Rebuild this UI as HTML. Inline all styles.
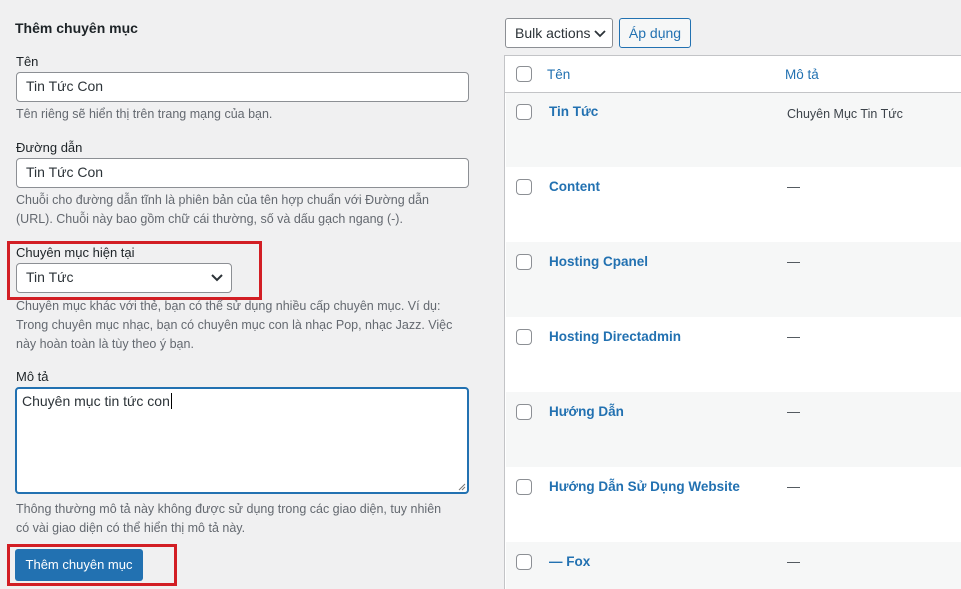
<!DOCTYPE html>
<html><head><meta charset="utf-8"><style>
*{margin:0;padding:0;box-sizing:border-box}
body{width:961px;height:589px;background:#f0f0f1;font-family:"Liberation Sans",sans-serif;font-size:13px;color:#3c434a;position:relative;overflow:hidden}
.a{position:absolute;white-space:nowrap}
.lbl{color:#1d2327;font-size:13px}
.help{color:#646970;font-size:12.5px;line-height:19px}
.inp{position:absolute;background:#fff;border:1px solid #8c8f94;border-radius:4px;font-size:14px;color:#2c3338;padding-left:9px;line-height:27px}
.red{position:absolute;border:3px solid #d21e24}
.cb{position:absolute;width:16px;height:16px;border:1px solid #8c8f94;border-radius:4px;background:#fff;left:516px}
.nm{position:absolute;left:549px;color:#2271b1;font-weight:bold;font-size:13.5px}
.ds{position:absolute;left:787px;color:#3c434a}
.row{position:absolute;left:506px;width:455px;height:75px}
</style></head><body>
<div class="a" style="left:15px;top:20px;font-weight:bold;font-size:14px;color:#1d2327">Thêm chuyên mục</div>
<div class="a lbl" style="left:16px;top:54px">Tên</div>
<div class="inp" style="left:16px;top:72px;width:453px;height:30px">Tin Tức Con</div>
<div class="a help" style="left:16px;top:105px">Tên riêng sẽ hiển thị trên trang mạng của bạn.</div>
<div class="a lbl" style="left:16px;top:140px">Đường dẫn</div>
<div class="inp" style="left:16px;top:158px;width:453px;height:30px">Tin Tức Con</div>
<div class="a help" style="left:16px;top:191px">Chuỗi cho đường dẫn tĩnh là phiên bản của tên hợp chuẩn với Đường dẫn<br>(URL). Chuỗi này bao gồm chữ cái thường, số và dấu gạch ngang (-).</div>
<div class="red" style="left:7px;top:241px;width:255px;height:59px"></div>
<div class="a lbl" style="left:16px;top:245px">Chuyên mục hiện tại</div>
<div class="inp" style="left:16px;top:263px;width:216px;height:30px">Tin Tức
<svg style="position:absolute;right:7px;top:9px" width="14" height="10" viewBox="0 0 14 10"><path d="M2 2l5 5 5-5" stroke="#2c3338" stroke-width="2" fill="none"/></svg></div>
<div class="a help" style="left:16px;top:297px">Chuyên mục khác với thẻ, bạn có thể sử dụng nhiều cấp chuyên mục. Ví dụ:<br>Trong chuyên mục nhạc, bạn có chuyên mục con là nhạc Pop, nhạc Jazz. Việc<br>này hoàn toàn là tùy theo ý bạn.</div>
<div class="a lbl" style="left:16px;top:369px">Mô tả</div>
<div class="inp" style="left:15px;top:387px;width:454px;height:107px;border:2px solid #2271b1;padding-left:5px;line-height:25px">Chuyên mục tin tức con<span style="border-left:1px solid #000;margin-left:1px"></span>
<svg style="position:absolute;right:1px;bottom:1px" width="8" height="8"><path d="M7 1L1 7M7 4L4 7" stroke="#777"/></svg></div>
<div class="a help" style="left:16px;top:500px">Thông thường mô tả này không được sử dụng trong các giao diện, tuy nhiên<br>có vài giao diện có thể hiển thị mô tả này.</div>
<div class="red" style="left:7px;top:544px;width:170px;height:42px"></div>
<div class="a" style="left:15px;top:549px;width:128px;height:32px;background:#2271b1;border-radius:3px;color:#fff;font-size:13px;line-height:32px;text-align:center">Thêm chuyên mục</div>

<div class="a" style="left:505px;top:18px;width:108px;height:30px;background:#fff;border:1px solid #8c8f94;border-radius:3px;font-size:14px;color:#2c3338;line-height:28px;padding-left:9px">Bulk actions
<svg style="position:absolute;right:6px;top:10px" width="12" height="9"><path d="M1 2l5 5 5-5" stroke="#2c3338" stroke-width="1.8" fill="none"/></svg></div>
<div class="a" style="left:619px;top:18px;width:72px;height:30px;background:#f6f7f7;border:1px solid #2271b1;border-radius:3px;font-size:14px;color:#2271b1;line-height:28px;text-align:center">Áp dụng</div>

<div class="a" style="left:504px;top:55px;width:457px;height:534px;background:#fff;border-left:1px solid #c3c4c7;border-top:1px solid #c3c4c7"></div>
<div class="a" style="left:505px;top:92px;width:456px;height:1px;background:#c3c4c7"></div>
<div class="cb" style="top:66px"></div>
<div class="a" style="left:547px;top:67px;color:#2271b1;font-size:13.5px">Tên</div>
<div class="a" style="left:785px;top:67px;color:#2271b1;font-size:13.5px">Mô tả</div>

<div class="row" style="top:93px;height:74px;background:#f6f7f7"></div>
<div class="row" style="top:242px;background:#f6f7f7"></div>
<div class="row" style="top:392px;background:#f6f7f7"></div>
<div class="row" style="top:542px;height:47px;background:#f6f7f7"></div>

<div class="cb" style="top:104px"></div><div class="nm" style="top:104px">Tin Tức</div><div class="ds a" style="top:107px;font-size:12.5px">Chuyên Mục Tin Tức</div>
<div class="cb" style="top:179px"></div><div class="nm" style="top:179px">Content</div><div class="ds a" style="top:179px">—</div>
<div class="cb" style="top:254px"></div><div class="nm" style="top:254px">Hosting Cpanel</div><div class="ds a" style="top:254px">—</div>
<div class="cb" style="top:329px"></div><div class="nm" style="top:329px">Hosting Directadmin</div><div class="ds a" style="top:329px">—</div>
<div class="cb" style="top:404px"></div><div class="nm" style="top:404px">Hướng Dẫn</div><div class="ds a" style="top:404px">—</div>
<div class="cb" style="top:479px"></div><div class="nm" style="top:479px">Hướng Dẫn Sử Dụng Website</div><div class="ds a" style="top:479px">—</div>
<div class="cb" style="top:554px"></div><div class="nm" style="top:554px">— Fox</div><div class="ds a" style="top:554px">—</div>
</body></html>
